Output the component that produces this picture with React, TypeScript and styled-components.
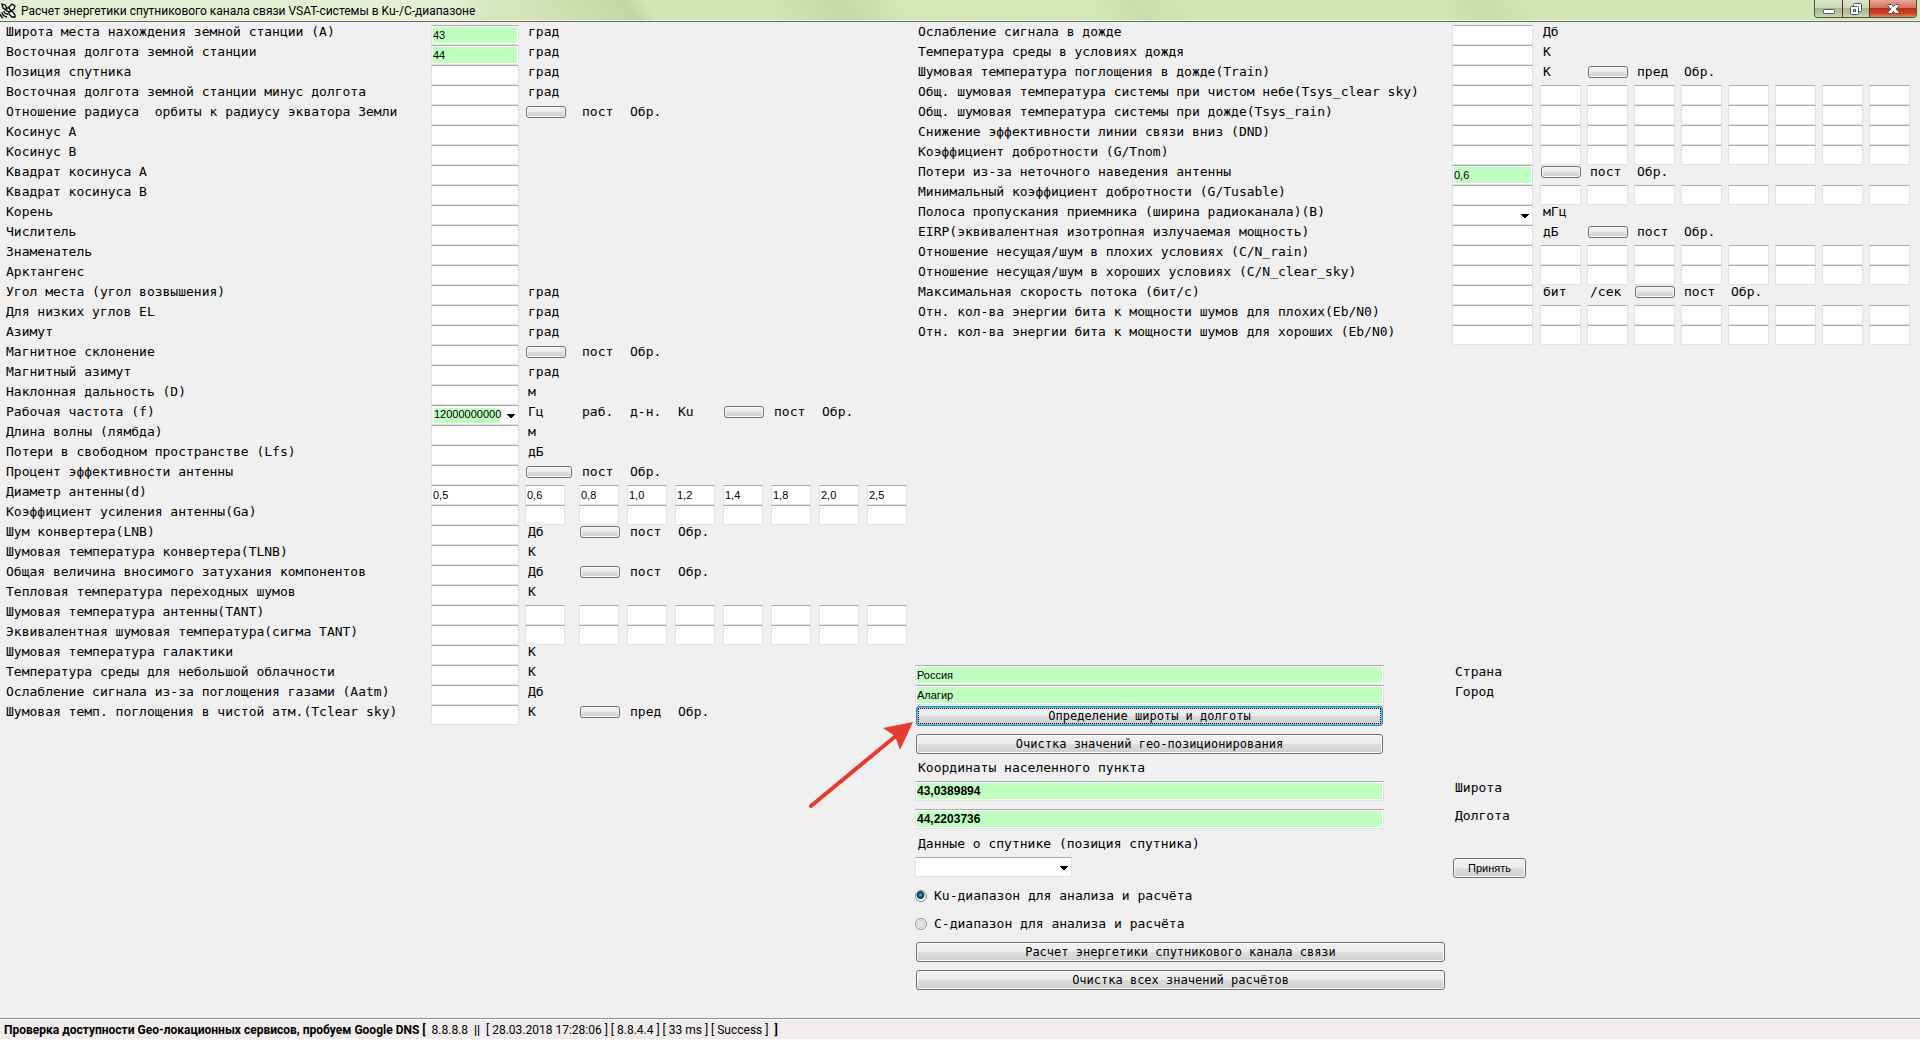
import React from 'react';
import styled, { createGlobalStyle } from 'styled-components';

const mono = '"DejaVu Sans Mono", "Liberation Mono", monospace';
const sans = '"Liberation Sans", Arial, sans-serif';
const ui = 'Roboto, "Open Sans", sans-serif';

const GlobalStyle = createGlobalStyle`
  *, *::before, *::after { box-sizing: border-box; }
  body { margin: 0; background: #f0f0f0; color: #000; font: 13px/14px ${mono}; }
  button, input, select { margin: 0; font: inherit; color: inherit; }
`;

const Window = styled.div`
  position: relative;
  display: flex;
  flex-direction: column;
  min-height: 100vh;
`;

const TitleBar = styled.header`
  display: flex;
  align-items: flex-start;
  height: 22px;
  border-bottom: 1px solid #666b5c;
  box-shadow: inset 0 -1px #eef4e2;
  background:
    linear-gradient(90deg, rgba(255, 255, 255, 0.4) 0 450px, transparent 490px),
    linear-gradient(60deg, #d6e6ba 0 27%, #c4d5a7 33%, #d4e5b7 34% 40%, #c5d6a8 44%, #d5e6b9 47% 57%, #ccdeaf 59%, #d2e5b5 62% 75%, #cadbac 77%, #d4e5b8 80%);
`;

const TitleIcon = styled.svg`
  width: 16px;
  height: 22px;
  flex: none;
`;

const Title = styled.h1`
  flex: 1;
  margin: 0;
  padding-left: 5px;
  font: 12px/22px ${ui};
  white-space: nowrap;
`;

const WindowButtons = styled.div`
  display: flex;
  margin-right: 3px;
  border: 1px solid #4e5548;
  border-top: 0;
  border-radius: 0 0 4px 4px;
  overflow: hidden;
`;

const WindowButton = styled.button<{ $close?: boolean }>`
  display: flex;
  align-items: center;
  justify-content: center;
  width: ${p => (p.$close ? 47 : 27)}px;
  height: 17px;
  padding: 0;
  border: 0;
  background: ${p =>
    p.$close
      ? 'linear-gradient(#e8a797 0, #d6715c 45%, #b9301a 50%, #c8482a 80%, #d98a62)'
      : 'linear-gradient(#dbe6cb 0, #ccd9b8 45%, #a9b893 50%, #b7c6a2 80%, #ccdab8)'};
  & + & { border-left: 1px solid ${p => (p.$close ? '#6b2018' : '#7a8470')}; }
`;

const Main = styled.main`
  flex: 1;
  display: grid;
  grid-template-columns: 915fr 1005fr;
  padding-top: 3px;
`;

const Side = styled.div`
  display: flex;
  flex-direction: column;
  justify-content: space-between;
`;

const Params = styled.div`
  display: flex;
  flex-direction: column;
`;

const Row = styled.div<{ $right?: boolean }>`
  display: grid;
  grid-template-columns: ${p => (p.$right ? '537px 88px repeat(7, 47px) 1fr' : '431px 94px 54px repeat(6, 48px) 1fr')};
  align-items: start;
  height: 20px;
  white-space: pre;
`;

const Name = styled.label<{ $right?: boolean }>`
  padding-left: ${p => (p.$right ? 3 : 6)}px;
`;

const Unit = styled.span<{ $cover?: boolean }>`
  justify-self: start;
  margin-left: ${p => (p.$cover ? 1 : 3)}px;
  padding-left: ${p => (p.$cover ? 2 : 0)}px;
  background: #f0f0f0;
  ${p => p.$cover && 'margin-top: -3px; padding-top: 3px;'}
`;

const Field = styled.input<{ $size: number; $bold?: boolean }>`
  width: ${p => p.$size}px;
  height: 20px;
  padding: 0 1px 1px;
  border: 1px solid #e2e3ea;
  border-top-color: #abadb3;
  border-radius: 1px;
  background: #fff;
  box-shadow: inset 0 0 0 1px #fff;
  font: ${p => (p.$bold ? 'bold 12px' : '11px')}/16px ${sans};
  outline: 0;
  &[readonly] { background: #c0ffc0; }
`;

const SelectBox = styled.select<{ $size: number; $filled?: boolean }>`
  width: ${p => p.$size}px;
  height: 20px;
  padding: 0 0 2px 2px;
  appearance: none;
  border: 1px solid #e2e3ea;
  border-top-color: #abadb3;
  border-radius: 1px;
  background:
    linear-gradient(to bottom left, #000 50%, transparent 51%) right 7px top 8px / 4px 4px no-repeat,
    linear-gradient(to bottom right, #000 50%, transparent 51%) right 3px top 8px / 4px 4px no-repeat,
    ${p => (p.$filled ? 'linear-gradient(#c0ffc0, #c0ffc0) 2px 2px / 66px 15px no-repeat,' : '')}
    #fff;
  font: 11px/16px ${sans};
`;

const Button = styled.button<{ $small?: boolean; $width: number; $active?: boolean; $sans?: boolean }>`
  width: ${p => p.$width}px;
  height: ${p => (p.$small ? 12 : 20)}px;
  margin: 1px 0 0 1px;
  padding: 0;
  border: 1px solid ${p => (p.$active ? '#3c7fb1' : '#707070')};
  border-radius: 3px;
  background: linear-gradient(#f2f2f2 0, #ebebeb 50%, #dddddd 50%, #cfcfcf);
  box-shadow: inset 0 0 0 1px ${p => (p.$active ? '#48c4f0' : '#fafafa')};
  font: ${p => (p.$sans ? `11px/16px ${sans}` : `12px/16px ${mono}`)};
  ${p => p.$active && 'outline: 1px dotted #000; outline-offset: -3px;'}
`;

const Geo = styled.form`
  padding-bottom: 21px;
`;

const GeoRow = styled.div<{ $tall?: boolean }>`
  display: grid;
  grid-template-columns: 537px 1fr;
  align-items: start;
  height: ${p => (p.$tall ? 28 : 20)}px;
  white-space: nowrap;
`;

const Choice = styled.label`
  display: flex;
  align-items: center;
  gap: 7px;
  height: 22px;
`;

const Radio = styled.input`
  appearance: none;
  width: 12px;
  height: 12px;
  border: 1px solid #8e8f8f;
  border-radius: 50%;
  background: radial-gradient(#e6e6e6 0 35%, #c8cccf 50%, #f4f4f4 60%);
  &:checked { background: radial-gradient(circle at 45% 40%, #5fc8ee 0, #17567e 25%, #0e2f49 44%, #f4f4f4 52%); }
`;

const StatusBar = styled.footer`
  height: 22px;
  padding-left: 4px;
  border-top: 1px solid #8f8f8f;
  border-bottom: 1px solid #fafafa;
  box-shadow: inset 0 1px #fff;
  background: #f1edec;
  font: 12px/22px ${ui};
  white-space: pre;
`;

const Pointer = styled.svg`
  position: absolute;
  left: 806px;
  top: 718px;
  width: 110px;
  height: 92px;
  pointer-events: none;
`;

type Param = { name: string; value?: string; editable?: boolean; list?: boolean; cells?: string[]; cover?: boolean };

const BTN = '[]';
const WIDE = '[  ]';
const BOX = '#';
const empty = (n: number) => Array<string>(n).fill(BOX);

const leftParams: Param[] = [
  { name: 'Широта места нахождения земной станции (A)', value: '43', cells: ['град'] },
  { name: 'Восточная долгота земной станции', value: '44', cells: ['град'] },
  { name: 'Позиция спутника', cells: ['град'] },
  { name: 'Восточная долгота земной станции минус долгота', cells: ['град'] },
  { name: 'Отношение радиуса  орбиты к радиусу экватора Земли', cells: [BTN, 'пост', 'Обр.'] },
  { name: 'Косинус A' },
  { name: 'Косинус B' },
  { name: 'Квадрат косинуса A' },
  { name: 'Квадрат косинуса B' },
  { name: 'Корень' },
  { name: 'Числитель' },
  { name: 'Знаменатель' },
  { name: 'Арктангенс' },
  { name: 'Угол места (угол возвышения)', cells: ['град'] },
  { name: 'Для низких углов EL', cells: ['град'] },
  { name: 'Азимут', cells: ['град'] },
  { name: 'Магнитное склонение', cells: [BTN, 'пост', 'Обр.'] },
  { name: 'Магнитный азимут', cells: ['град'] },
  { name: 'Наклонная дальность (D)', cells: ['м'] },
  { name: 'Рабочая частота (f)', value: '12000000000', list: true, cells: ['Гц', 'раб.', 'д-н.', 'Ku', BTN, 'пост', 'Обр.'] },
  { name: 'Длина волны (лямбда)', cells: ['м'] },
  { name: 'Потери в свободном пространстве (Lfs)', cells: ['дБ'] },
  { name: 'Процент эффективности антенны', cells: [WIDE, 'пост', 'Обр.'] },
  { name: 'Диаметр антенны(d)', value: '0,5', editable: true, cells: ['#0,6', '#0,8', '#1,0', '#1,2', '#1,4', '#1,8', '#2,0', '#2,5'] },
  { name: 'Коэффициент усиления антенны(Ga)', cells: empty(8) },
  { name: 'Шум конвертера(LNB)', cover: true, cells: ['Дб', BTN, 'пост', 'Обр.'] },
  { name: 'Шумовая температура конвертера(TLNB)', cells: ['К'] },
  { name: 'Общая величина вносимого затухания компонентов', cells: ['Дб', BTN, 'пост', 'Обр.'] },
  { name: 'Тепловая температура переходных шумов', cells: ['К'] },
  { name: 'Шумовая температура антенны(TANT)', cells: empty(8) },
  { name: 'Эквивалентная шумовая температура(сигма TANT)', cells: empty(8) },
  { name: 'Шумовая температура галактики', cover: true, cells: ['К'] },
  { name: 'Температура среды для небольшой облачности', cells: ['К'] },
  { name: 'Ослабление сигнала из-за поглощения газами (Aatm)', cells: ['Дб'] },
  { name: 'Шумовая темп. поглощения в чистой атм.(Tclear sky)', cells: ['К', BTN, 'пред', 'Обр.'] },
];

const rightParams: Param[] = [
  { name: 'Ослабление сигнала в дожде', cells: ['Дб'] },
  { name: 'Температура среды в условиях дождя', cells: ['К'] },
  { name: 'Шумовая температура поглощения в дожде(Train)', cells: ['К', BTN, 'пред', 'Обр.'] },
  { name: 'Общ. шумовая температура системы при чистом небе(Tsys_clear sky)', cells: empty(8) },
  { name: 'Общ. шумовая температура системы при дожде(Tsys_rain)', cells: empty(8) },
  { name: 'Снижение эффективности линии связи вниз (DND)', cells: empty(8) },
  { name: 'Коэффициент добротности (G/Tnom)', cells: empty(8) },
  { name: 'Потери из-за неточного наведения антенны', value: '0,6', cells: [BTN, 'пост', 'Обр.'] },
  { name: 'Минимальный коэффициент добротности (G/Tusable)', cells: empty(8) },
  { name: 'Полоса пропускания приемника (ширина радиоканала)(B)', list: true, cells: ['мГц'] },
  { name: 'EIRP(эквивалентная изотропная излучаемая мощность)', cells: ['дБ', BTN, 'пост', 'Обр.'] },
  { name: 'Отношение несущая/шум в плохих условиях (C/N_rain)', cells: empty(8) },
  { name: 'Отношение несущая/шум в хороших условиях (C/N_clear_sky)', cells: empty(8) },
  { name: 'Максимальная скорость потока (бит/с)', cells: ['бит', '/сек', BTN, 'пост', 'Обр.'] },
  { name: 'Отн. кол-ва энергии бита к мощности шумов для плохих(Eb/N0)', cells: empty(8) },
  { name: 'Отн. кол-ва энергии бита к мощности шумов для хороших (Eb/N0)', cells: empty(8) },
];

function ParamRow({ param, id, right }: { param: Param; id: string; right?: boolean }) {
  const { name, value, editable, list, cells = [], cover } = param;
  const size = right ? 81 : 88;
  return (
    <Row $right={right}>
      <Name htmlFor={id} $right={right}>{name}</Name>
      {list ? (
        <SelectBox id={id} $size={size} $filled={!!value} defaultValue={value}>
          <option>{value ?? ''}</option>
        </SelectBox>
      ) : (
        <Field id={id} $size={size} defaultValue={value} readOnly={!!value && !editable} />
      )}
      {cells.map((cell, i) => {
        if (cell === BTN || cell === WIDE) {
          return <Button key={i} type="button" aria-label={`Обработать: ${name}`} $small $width={cell === WIDE ? 46 : 40} />;
        }
        if (cell.startsWith(BOX)) {
          return <Field key={i} $size={right ? 41 : 40} defaultValue={cell.slice(1)} aria-label={`${name}, ${i + 2}`} />;
        }
        return <Unit key={i} $cover={cover && i === 0}>{cell}</Unit>;
      })}
    </Row>
  );
}

export default function App() {
  return (
    <Window>
      <GlobalStyle />
      <TitleBar>
        <TitleIcon viewBox="0 0 16 22" fill="none" stroke="#000" strokeWidth="1.3">
          <path d="M2 4l3 1 2 3-1 2-3-2zM9 7l3-3 3 2-1 3-4 2z" fill="#fff" />
          <path d="M6 8l3 0 2 3-1 1-3-1zM9 12l3-1 3 4v2h-3l-3-3z" fill="#fff" />
          <path d="M4 11q0 3 4 3M2 12q0 4 5 5M0 14q1 3 3 4" />
        </TitleIcon>
        <Title>Расчет энергетики спутникового канала связи VSAT-системы в Ku-/C-диапазоне</Title>
        <WindowButtons>
          <WindowButton type="button" aria-label="Свернуть">
            <svg width="14" height="12"><rect x="1.500" y="6.500" width="11" height="4" rx="1" fill="#fff" stroke="#4d5561" /></svg>
          </WindowButton>
          <WindowButton type="button" aria-label="Восстановить">
            <svg width="12" height="12" fill="#fff" stroke="#4d5561">
              <rect x="3.500" y=".5" width="8" height="8" rx="1" />
              <rect x=".5" y="3.500" width="8" height="8" rx="1" />
              <rect x="3.500" y="6.500" width="2" height="2" />
            </svg>
          </WindowButton>
          <WindowButton type="button" aria-label="Закрыть" $close>
            <svg width="13" height="12" viewBox="0 0 13 12"><path d="M1 1.500h3.500l2 2 2-2H12v1.500L9 6l3 3v1.500H8.500l-2-2-2 2H1V9l3-3-3-3z" fill="#fff" stroke="#5a5562" /></svg>
          </WindowButton>
        </WindowButtons>
      </TitleBar>
      <Main>
        <Params>
          {leftParams.map((p, i) => <ParamRow key={i} id={`l${i}`} param={p} />)}
        </Params>
        <Side>
          <Params>
            {rightParams.map((p, i) => <ParamRow key={i} id={`r${i}`} param={p} right />)}
          </Params>
          <Geo onSubmit={e => e.preventDefault()}>
            <GeoRow>
              <Field id="country" $size={469} readOnly defaultValue="Россия" />
              <Name htmlFor="country" $right>Страна</Name>
            </GeoRow>
            <GeoRow>
              <Field id="city" $size={469} readOnly defaultValue="Алагир" />
              <Name htmlFor="city" $right>Город</Name>
            </GeoRow>
            <GeoRow $tall><Button type="button" $width={467} $active>Определение широты и долготы</Button></GeoRow>
            <GeoRow $tall><Button type="button" $width={467}>Очистка значений гео-позиционирования</Button></GeoRow>
            <GeoRow><Name as="span" $right>Координаты населенного пункта</Name></GeoRow>
            <GeoRow $tall>
              <Field id="lat" $size={469} $bold readOnly defaultValue="43,0389894" />
              <Name htmlFor="lat" $right>Широта</Name>
            </GeoRow>
            <GeoRow $tall>
              <Field id="lon" $size={469} $bold readOnly defaultValue="44,2203736" />
              <Name htmlFor="lon" $right>Долгота</Name>
            </GeoRow>
            <GeoRow><Name htmlFor="sat" $right>Данные о спутнике (позиция спутника)</Name></GeoRow>
            <GeoRow $tall>
              <SelectBox id="sat" $size={157}><option /></SelectBox>
              <Button type="button" $width={73} $sans>Принять</Button>
            </GeoRow>
            <GeoRow $tall><Choice><Radio type="radio" name="band" defaultChecked />Ku-диапазон для анализа и расчёта</Choice></GeoRow>
            <GeoRow $tall><Choice><Radio type="radio" name="band" />C-диапазон для анализа и расчёта</Choice></GeoRow>
            <GeoRow $tall><Button type="button" $width={529}>Расчет энергетики спутникового канала связи</Button></GeoRow>
            <GeoRow $tall><Button type="button" $width={529}>Очистка всех значений расчётов</Button></GeoRow>
          </Geo>
        </Side>
      </Main>
      <StatusBar>
        <b>Проверка доступности Geo-локационных сервисов, пробуем Google DNS [  </b>8.8.8.8<b>  ||  </b>[ 28.03.2018 17:28:06 ] [ 8.8.4.4 ] [ 33 ms ] [ Success ]<b>  ]</b>
      </StatusBar>
      <Pointer viewBox="0 0 110 92" aria-hidden="true">
        <path d="M5 88L91 17" stroke="#e63c2f" strokeWidth="4" strokeLinecap="round" />
        <path d="M107 4L94 32L89 18L77 10z" fill="#e63c2f" />
      </Pointer>
    </Window>
  );
}
